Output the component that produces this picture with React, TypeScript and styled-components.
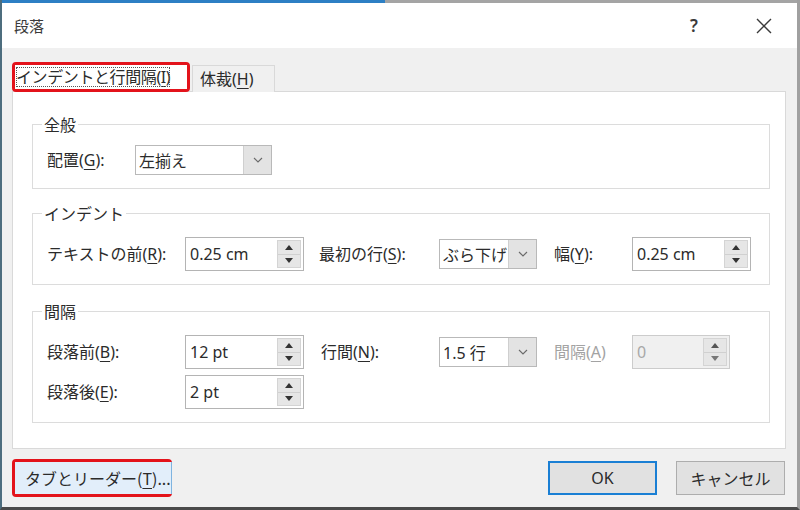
import React from 'react';
import styled, { createGlobalStyle } from 'styled-components';

const GlobalStyle = createGlobalStyle`
  html, body {
    margin: 0;
    padding: 0;
    background: #ffffff;
  }
  body {
    font-family: 'Noto Sans', 'Noto Sans CJK JP', sans-serif;
    font-size: 16px;
    color: #2b2b2b;
  }
  u {
    text-decoration-thickness: 1px;
    text-underline-offset: 3px;
  }
`;

const App = (): JSX.Element => {
  return (
    <>
      <GlobalStyle />
      <Window>
        <TopEdge />
        <TitleBar>
          <Title>段落</Title>
          <TitleButtons>
            <HelpMark>?</HelpMark>
            <CloseMark>
              <svg width="18" height="18" viewBox="0 0 18 18">
                <path d="M2 2 L16 16 M16 2 L2 16" stroke="#3a3a3a" strokeWidth="1.4" fill="none" />
              </svg>
            </CloseMark>
          </TitleButtons>
        </TitleBar>
        <Body>
          <TabBar>
            <RedMark $tab>
              <Tab $active>
                <TabFocus>
                  インデントと行間隔(<u>I</u>)
                </TabFocus>
              </Tab>
            </RedMark>
            <Tab>
              体裁(<u>H</u>)
            </Tab>
          </TabBar>
          <Panel>
            <Group>
              <Legend>全般</Legend>
              <Row>
                <Label $width={88}>
                  配置(<u>G</u>):
                </Label>
                <Combo value="左揃え" width={137} />
              </Row>
            </Group>
            <Group>
              <Legend>インデント</Legend>
              <Grid>
                <Label>
                  テキストの前(<u>R</u>):
                </Label>
                <Spin value="0.25 cm" width={119} />
                <Label $indent={15}>
                  最初の行(<u>S</u>):
                </Label>
                <Combo value="ぶら下げ" width={98} />
                <Label $indent={17}>
                  幅(<u>Y</u>):
                </Label>
                <Spin value="0.25 cm" width={119} />
              </Grid>
            </Group>
            <Group>
              <Legend>間隔</Legend>
              <Grid>
                <Label>
                  段落前(<u>B</u>):
                </Label>
                <Spin value="12 pt" width={119} />
                <Label $indent={17}>
                  行間(<u>N</u>):
                </Label>
                <Combo value="1.5 行" width={98} />
                <Label $indent={17} $disabled>
                  間隔(<u>A</u>)
                </Label>
                <Spin value="0" width={98} disabled />
                <Label>
                  段落後(<u>E</u>):
                </Label>
                <Spin value="2 pt" width={119} />
              </Grid>
            </Group>
          </Panel>
          <Footer>
            <RedMark>
              <LeaderButton>
                タブとリーダー(<u>T</u>)...
              </LeaderButton>
            </RedMark>
            <FooterRight>
              <DialogButton $primary>OK</DialogButton>
              <DialogButton>キャンセル</DialogButton>
            </FooterRight>
          </Footer>
        </Body>
      </Window>
    </>
  );
};

export default App;

interface ComboProps {
  value: string;
  width: number;
}

const Combo = ({ value, width }: ComboProps): JSX.Element => (
  <ComboBox style={{ width }}>
    <ComboText>{value}</ComboText>
    <ComboArrow>
      <svg width="10" height="6" viewBox="0 0 10 6">
        <polyline points="1,1 5,5 9,1" stroke="#6a6a6a" strokeWidth="1.1" fill="none" />
      </svg>
    </ComboArrow>
  </ComboBox>
);

interface SpinProps {
  value: string;
  width: number;
  disabled?: boolean;
}

const Spin = ({ value, width, disabled }: SpinProps): JSX.Element => (
  <SpinBox style={{ width }} $disabled={disabled}>
    <SpinText $disabled={disabled}>{value}</SpinText>
    <SpinButtons>
      <SpinHalf>
        <svg width="8" height="5" viewBox="0 0 8 5">
          <polygon points="0,5 4,0 8,5" fill={disabled ? '#555' : '#333'} />
        </svg>
      </SpinHalf>
      <SpinHalf $bottom>
        <svg width="8" height="5" viewBox="0 0 8 5">
          <polygon points="0,0 8,0 4,5" fill={disabled ? '#777' : '#333'} />
        </svg>
      </SpinHalf>
    </SpinButtons>
  </SpinBox>
);

const Window = styled.div`
  width: 800px;
  height: 510px;
  box-sizing: border-box;
  display: flex;
  flex-direction: column;
  border-left: 2px solid #4d6d7e;
  border-right: 3px solid #a0a0a0;
  border-bottom: 3px solid #4a4a4a;
  background: #f0f0f0;
`;

const TopEdge = styled.div`
  height: 3px;
  background: linear-gradient(to right, #2d7fc4 0 383px, #a4a4a4 383px);
`;

const TitleBar = styled.div`
  height: 45px;
  display: flex;
  align-items: center;
  justify-content: space-between;
  background: #ffffff;
  padding: 0 10px 0 12px;
`;

const Title = styled.div`
  font-size: 15px;
  color: #3a3a3a;
  font-family: 'Noto Sans CJK JP', sans-serif;
`;

const TitleButtons = styled.div`
  display: flex;
  align-items: center;
  gap: 24px;
`;

const HelpMark = styled.div`
  width: 46px;
  text-align: center;
  font-size: 17px;
  font-weight: 600;
  color: #3a3a3a;
`;

const CloseMark = styled.div`
  width: 46px;
  display: flex;
  justify-content: center;
`;

const Body = styled.div`
  flex: 1;
  display: flex;
  flex-direction: column;
  padding: 14px 11px 0 10px;
`;

const TabBar = styled.div`
  display: flex;
  align-items: flex-end;
  height: 30px;
  gap: 2px;
  position: relative;
  z-index: 1;
`;

const RedMark = styled.div<{ $tab?: boolean }>`
  box-sizing: border-box;
  border: 3px solid #e3131b;
  border-radius: 4px;
  display: flex;
  flex: none;
  ${({ $tab }) => ($tab ? 'height: 30px; width: 178px;' : 'height: 38px; width: 160px;')}
`;

const Tab = styled.div<{ $active?: boolean }>`
  box-sizing: border-box;
  display: flex;
  align-items: center;
  font-family: 'Noto Sans', 'Noto Sans CJK JP', sans-serif;
  font-size: 16px;
  line-height: 20px;
  background: ${({ $active }) => ($active ? '#ffffff' : '#f0f0f0')};
  border: ${({ $active }) => ($active ? 'none' : '1px solid #d9d9d9')};
  border-bottom: none;
  padding: ${({ $active }) => ($active ? '0 1px' : '0 7px')};
  height: ${({ $active }) => ($active ? '24px' : '27px')};
  flex: ${({ $active }) => ($active ? '1' : 'none')};
  width: ${({ $active }) => ($active ? 'auto' : '83px')};
  white-space: nowrap;
`;

const TabFocus = styled.span`
  outline: 1px dotted #555;
  outline-offset: -1px;
  letter-spacing: -0.4px;
  white-space: nowrap;
`;

const Panel = styled.div`
  box-sizing: border-box;
  height: 358px;
  margin-top: -1px;
  background: #ffffff;
  border: 1px solid #d9d9d9;
  padding: 22px 15px 0 19px;
  display: flex;
  flex-direction: column;
  gap: 14px;
`;

const Group = styled.fieldset`
  margin: 0;
  border: 1px solid #dcdcdc;
  padding: 11px 10px 13px 14px;
  min-width: 0;
  &:nth-of-type(2) {
    padding-top: 14px;
  }
  &:nth-of-type(3) {
    margin-top: 2px;
    padding-top: 14px;
  }
`;

const Legend = styled.legend`
  font-family: 'Noto Sans CJK JP', sans-serif;
  font-size: 16px;
  line-height: 20px;
  padding: 0 2px;
  margin-left: -5px;
  color: #2b2b2b;
`;

const Row = styled.div`
  display: flex;
  align-items: center;
  height: 30px;
`;

const Grid = styled.div`
  display: grid;
  grid-template-columns: 138px 119px 135px 98px 95px 119px;
  row-gap: 6px;
  align-items: center;
`;

const Label = styled.div<{ $width?: number; $indent?: number; $disabled?: boolean }>`
  font-family: 'Noto Sans', 'Noto Sans CJK JP', sans-serif;
  font-size: 16px;
  line-height: 20px;
  white-space: nowrap;
  color: ${({ $disabled }) => ($disabled ? '#a3a3a3' : '#2b2b2b')};
  padding-left: ${({ $indent }) => $indent ?? 0}px;
  ${({ $width }) => ($width ? `width: ${$width}px; flex: none;` : '')}
`;

const ComboBox = styled.div`
  box-sizing: border-box;
  height: 30px;
  display: flex;
  border: 1px solid #b9b9b9;
  background: #ffffff;
`;

const ComboText = styled.div`
  flex: 1;
  overflow: hidden;
  white-space: nowrap;
  padding-left: 3px;
  display: flex;
  align-items: center;
  font-size: 16px;
  font-family: 'Noto Sans', 'Noto Sans CJK JP', sans-serif;
`;

const ComboArrow = styled.div`
  width: 27px;
  flex: none;
  display: flex;
  align-items: center;
  justify-content: center;
  background: #e3e3e3;
  border-left: 1px solid #cfcfcf;
`;

const SpinBox = styled.div<{ $disabled?: boolean }>`
  box-sizing: border-box;
  height: 34px;
  display: flex;
  border: 1px solid ${({ $disabled }) => ($disabled ? '#cccccc' : '#b4b4b4')};
  background: ${({ $disabled }) => ($disabled ? '#f0f0f0' : '#ffffff')};
  padding: 2px;
`;

const SpinText = styled.div<{ $disabled?: boolean }>`
  flex: 1;
  display: flex;
  align-items: center;
  padding-left: 2px;
  font-size: 16px;
  color: ${({ $disabled }) => ($disabled ? '#a8a8a8' : '#2b2b2b')};
  white-space: nowrap;
`;

const SpinButtons = styled.div`
  width: 22px;
  flex: none;
  display: flex;
  flex-direction: column;
  background: #e6e6e6;
  border: 1px solid #d4d4d4;
`;

const SpinHalf = styled.div<{ $bottom?: boolean }>`
  flex: 1;
  display: flex;
  align-items: center;
  justify-content: center;
  border-top: ${({ $bottom }) => ($bottom ? '1px solid #d0d0d0' : 'none')};
`;

const Footer = styled.div`
  flex: 1;
  display: flex;
  align-items: center;
  justify-content: space-between;
  padding-right: 1px;
`;

const FooterRight = styled.div`
  display: flex;
  gap: 19px;
`;

const LeaderButton = styled.div`
  flex: 1;
  display: flex;
  align-items: center;
  padding-left: 10px;
  background: #e2eefa;
  border-right: 1px solid #7fb4e0;
  font-family: 'Noto Sans CJK JP', sans-serif;
  font-size: 16px;
  white-space: nowrap;
`;

const DialogButton = styled.div<{ $primary?: boolean }>`
  box-sizing: border-box;
  width: 109px;
  height: 34px;
  display: flex;
  align-items: center;
  justify-content: center;
  background: #e1e1e1;
  border: ${({ $primary }) => ($primary ? '2px solid #1a7fd4' : '1px solid #adadad')};
  font-family: 'Noto Sans', 'Noto Sans CJK JP', sans-serif;
  font-size: 16px;
  color: #2b2b2b;
`;
